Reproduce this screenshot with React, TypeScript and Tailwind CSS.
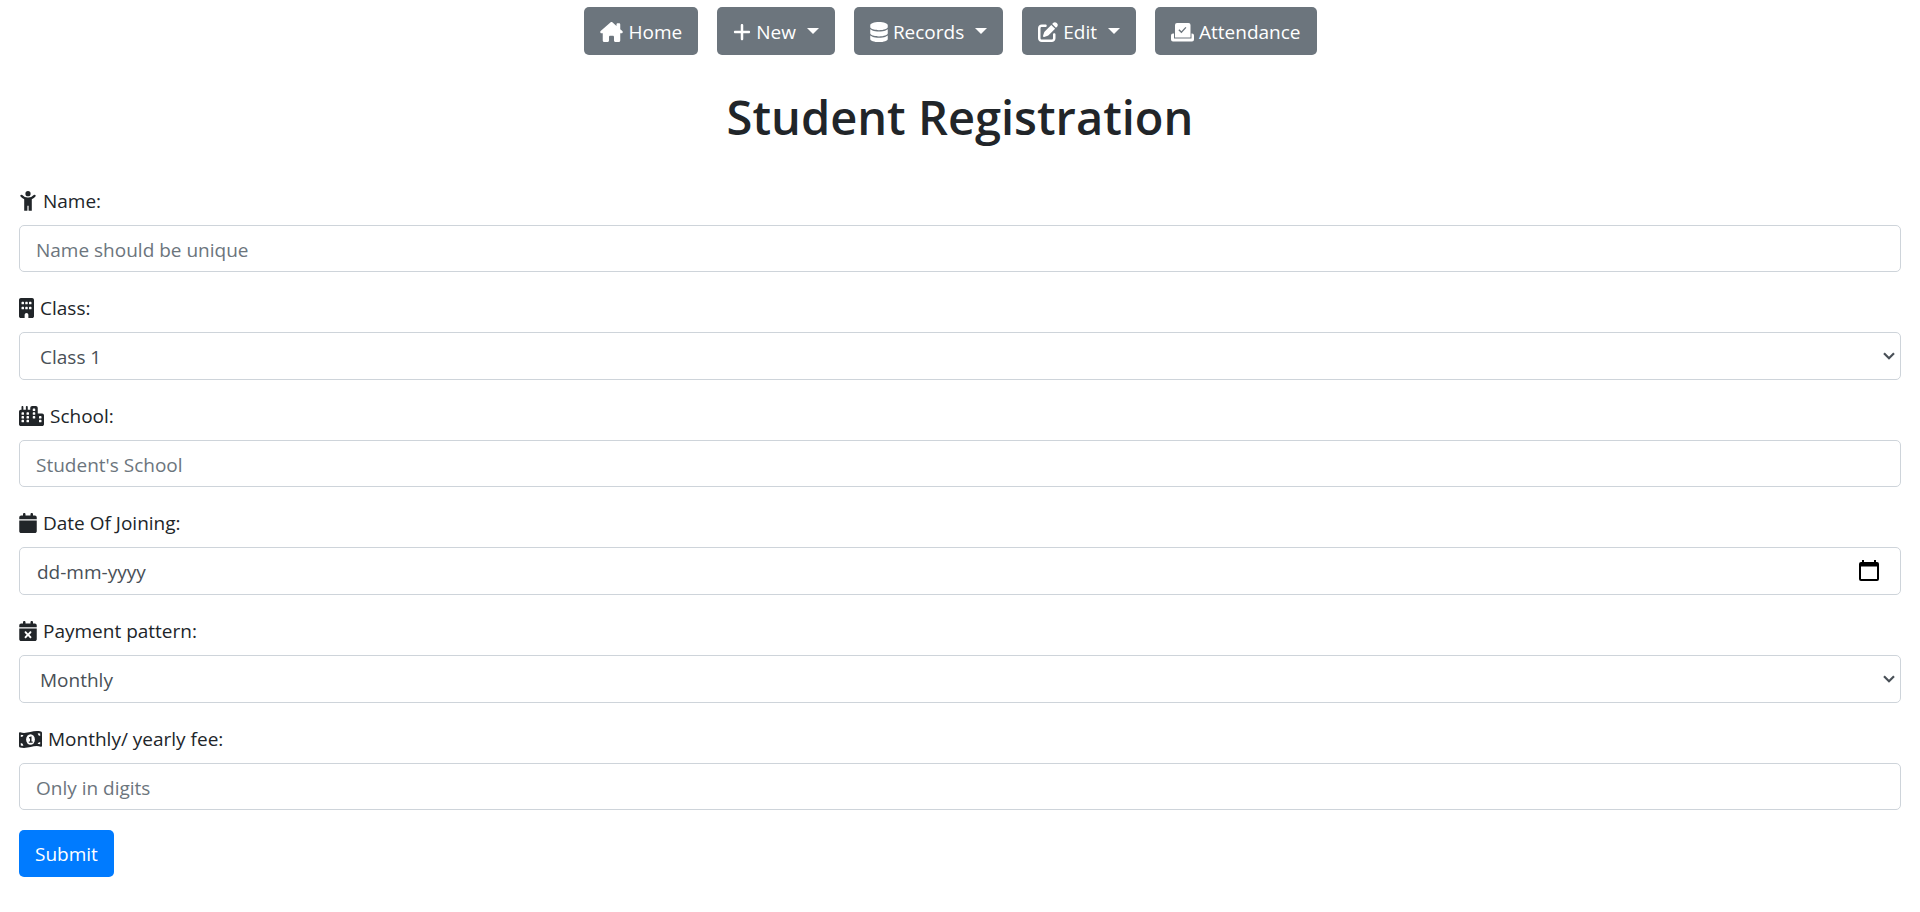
import type { ReactNode } from "react";
import {
  FaBuilding,
  FaCalendar,
  FaCalendarXmark,
  FaCity,
  FaDatabase,
  FaHouseChimney,
  FaPenToSquare,
  FaPlus,
} from "react-icons/fa6";

const navButton =
  "flex h-12 items-center rounded-[5px] bg-[#6c757d] px-4 pt-[2px] text-white hover:bg-[#5a6268]";
const control =
  "w-full rounded-[5px] border border-[#ced4da] bg-white text-[#495057] outline-none focus:border-[#80bdff]";
const textInput = `${control} block h-[47px] px-4 pt-[2px] placeholder:text-[#6c757d]`;

function Caret() {
  return (
    <svg className="mb-[2px] ml-[11px] h-[6px] w-3" viewBox="0 0 12 6" aria-hidden="true">
      <path d="M0 0h12L6 6z" fill="currentColor" />
    </svg>
  );
}

function BallotIcon() {
  return (
    <svg className="mr-[5px] h-5 w-[23px]" viewBox="0 0 23 20" aria-hidden="true">
      <path
        d="M6 1h11.500a2 2 0 0 1 2 2v12.500h-15.500V3a2 2 0 0 1 2-2zM7.400 8.200l3 3 5-5.400-1-.9-4 4.300-2-2z"
        fill="currentColor"
        fillRule="evenodd"
      />
      <path
        d="M2 11.500h1v5h17.500v-5h.5a2 2 0 0 1 2 2v4a2 2 0 0 1-2 2H2a2 2 0 0 1-2-2v-4a2 2 0 0 1 2-2z"
        fill="currentColor"
      />
    </svg>
  );
}

function ChildIcon() {
  return (
    <svg className="h-5 w-[18px]" viewBox="0 0 18 20" aria-hidden="true">
      <circle cx="9" cy="2.700" r="2.600" fill="currentColor" />
      <path d="M2.400 4.800Q5 7.800 9 7.800t6.600-3" fill="none" stroke="currentColor" strokeWidth="2.200" strokeLinecap="round" />
      <path d="M5.200 6.800h7.600V19.800h-3.200v-5h-1.200v5H5.200z" fill="currentColor" />
    </svg>
  );
}

function BanknoteIcon() {
  return (
    <svg className="h-[17px] w-[23px]" viewBox="0 0 23 17" aria-hidden="true">
      <path
        d="M0 2.200Q0 1 1.200 1.300C8 3.600 14-1.400 22 .6q1 .3 1 1.400V14.800q0 1.200-1.200.9C15 13.400 9 18.400 1 16.400q-1-.3-1-1.400z"
        fill="currentColor"
      />
      <ellipse cx="11.500" cy="8.500" rx="4.400" ry="5.200" fill="#fff" />
      <path d="M10 6.300l2.500-1v5.200h1.200v1.300H9.800v-1.300h1.200V7.200l-1 .4z" fill="currentColor" />
      <path
        d="M1.800 3.700q1.500.4 2.600.2 0 2-2.600 2.200zM1.800 12q2.400.2 2.600 2.800-1.500 0-2.600-.3zM21.200 5q-2.300-.2-2.500-2.800 1.300 0 2.500.3zM21.200 13.300q-1.400-.4-2.600-.2.200-2 2.600-2.200z"
        fill="#fff"
      />
    </svg>
  );
}

function Field({
  id,
  label,
  icon,
  children,
}: {
  id: string;
  label: string;
  icon: ReactNode;
  children: ReactNode;
}) {
  return (
    <div className="mb-5">
      <label htmlFor={id} className="mb-[10px] flex h-[30px] items-center gap-[6px] pt-[2px]">
        {icon}
        <span>{label}</span>
      </label>
      {children}
    </div>
  );
}

function SelectBox({ id, options }: { id: string; options: string[] }) {
  return (
    <div className="relative">
      <select id={id} className={`${control} block h-12 appearance-none pt-[2px] pr-8 pl-5`}>
        {options.map((option) => (
          <option key={option}>{option}</option>
        ))}
      </select>
      <svg
        className="pointer-events-none absolute top-5 right-[6px] h-2 w-3"
        viewBox="0 0 12 8"
        fill="none"
        stroke="#495057"
        strokeWidth="2.2"
        aria-hidden="true"
      >
        <path d="M1 1.200l5 5 5-5" />
      </svg>
    </div>
  );
}

export default function App() {
  return (
    <div className="min-h-screen bg-white font-['Open_Sans','Noto_Sans',sans-serif] text-[19px] leading-[30px] text-[#212529]">
      <nav className="flex justify-center gap-[19px] pt-[7px] pr-[19px]">
        <button type="button" className={navButton}>
          <FaHouseChimney className="mr-[5px] h-5 w-[23px]" />
          Home
        </button>
        <button type="button" className={navButton}>
          <FaPlus className="mr-[5px] h-5 w-[18px]" />
          New
          <Caret />
        </button>
        <button type="button" className={navButton}>
          <FaDatabase className="mr-[5px] h-5 w-[18px]" />
          Records
          <Caret />
        </button>
        <button type="button" className={navButton}>
          <FaPenToSquare className="mr-[5px] h-5 w-5" />
          Edit
          <Caret />
        </button>
        <button type="button" className={navButton}>
          <BallotIcon />
          Attendance
        </button>
      </nav>

      <main className="px-[19px] pb-8">
        <h1 className="pt-8 pb-[38px] text-center text-[47px] leading-[60px] font-semibold">
          Student Registration
        </h1>
        <form onSubmit={(event) => event.preventDefault()}>
          <Field id="name" label="Name:" icon={<ChildIcon />}>
            <input id="name" type="text" placeholder="Name should be unique" className={textInput} />
          </Field>
          <Field id="class" label="Class:" icon={<FaBuilding className="h-5 w-[15px]" />}>
            <SelectBox id="class" options={["Class 1", "Class 2", "Class 3", "Class 4", "Class 5"]} />
          </Field>
          <Field id="school" label="School:" icon={<FaCity className="h-5 w-[25px]" />}>
            <input id="school" type="text" placeholder="Student's School" className={textInput} />
          </Field>
          <Field id="joining" label="Date Of Joining:" icon={<FaCalendar className="h-5 w-[18px]" />}>
            <div className={`${control} flex h-12 items-center pr-[21px]`}>
              <input
                id="joining"
                type="text"
                placeholder="dd-mm-yyyy"
                className="h-full min-w-0 flex-1 bg-transparent pt-[2px] pl-[17px] outline-none placeholder:text-[#495057]"
              />
              <button type="button" aria-label="Open calendar" className="text-black">
                <svg className="mb-[2px] h-[21px] w-5" viewBox="0 0 20 21" aria-hidden="true">
                  <path
                    d="M3 0h2v2h10V0h2v2h1a2 2 0 0 1 2 2v15a2 2 0 0 1-2 2H2a2 2 0 0 1-2-2V4a2 2 0 0 1 2-2h1zM2 6.500v12.500h16V6.500z"
                    fill="currentColor"
                    fillRule="evenodd"
                  />
                </svg>
              </button>
            </div>
          </Field>
          <Field id="pattern" label="Payment pattern:" icon={<FaCalendarXmark className="h-5 w-[18px]" />}>
            <SelectBox id="pattern" options={["Monthly", "Yearly"]} />
          </Field>
          <Field id="fee" label="Monthly/ yearly fee:" icon={<BanknoteIcon />}>
            <input
              id="fee"
              type="text"
              inputMode="numeric"
              placeholder="Only in digits"
              className={textInput}
            />
          </Field>
          <button
            type="submit"
            className="h-[47px] rounded-[5px] bg-[#007bff] px-4 text-white hover:bg-[#0069d9]"
          >
            Submit
          </button>
        </form>
      </main>
    </div>
  );
}
